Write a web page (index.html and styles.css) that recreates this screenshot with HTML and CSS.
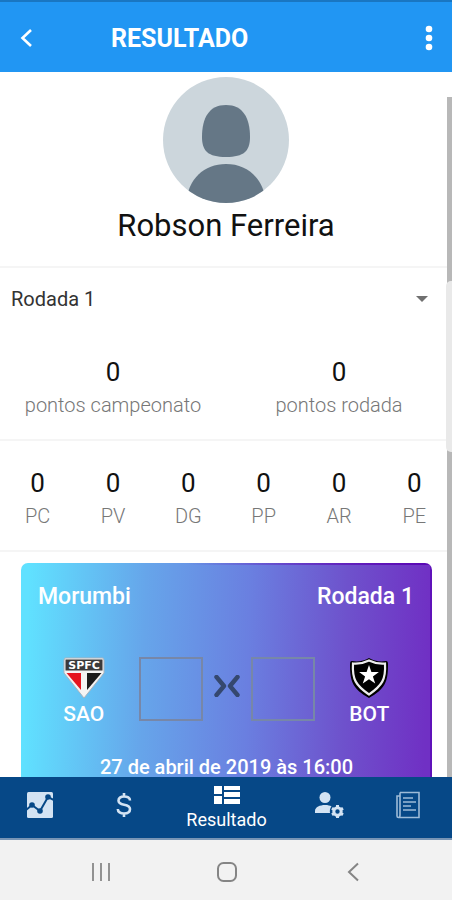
FILE: index.html
```html
<!DOCTYPE html>
<html lang="pt-BR">
<head>
<meta charset="utf-8">
<meta name="viewport" content="width=device-width, initial-scale=1">
<title>Resultado</title>
<link rel="stylesheet" href="styles.css">
</head>
<body>
<header class="topbar">
  <button class="icon-button" type="button" aria-label="Voltar">
    <svg width="14" height="20" viewBox="0 0 14 20"><path d="M13 2 4.500 10l8.500 8" fill="none" stroke="currentColor" stroke-width="2.6"/></svg>
  </button>
  <h1 class="topbar-title">RESULTADO</h1>
  <button class="icon-button icon-button-end" type="button" aria-label="Mais opções">
    <svg width="8" height="26" viewBox="0 0 8 26" fill="currentColor"><circle cx="4" cy="4" r="3.3"/><circle cx="4" cy="13" r="3.3"/><circle cx="4" cy="22" r="3.3"/></svg>
  </button>
</header>

<main class="content">
  <section class="profile">
    <svg class="avatar" viewBox="0 0 126 126" aria-hidden="true">
      <defs><clipPath id="avatar-circle"><circle cx="63" cy="63" r="63"/></clipPath></defs>
      <g clip-path="url(#avatar-circle)">
        <rect width="126" height="126" fill="#ccd6dc"/>
        <path d="M63 28c17 0 24 13 24 32 0 14-6 20-24 20s-24-6-24-20c0-19 7-32 24-32Z" fill="#657786"/>
        <path d="M23 126c2-24 18-39 40-39s38 15 40 39Z" fill="#657786"/>
      </g>
    </svg>
    <h2 class="profile-name">Robson Ferreira</h2>
  </section>

  <section class="summary">
    <label class="round-picker">
      <select class="round-select" aria-label="Rodada">
        <option>Rodada 1</option>
      </select>
      <svg class="round-caret" width="12" height="6" viewBox="0 0 12 6"><path d="M0 0h12L6 6Z" fill="#707070"/></svg>
    </label>
    <dl class="stats stats-points">
      <div class="stat"><dt>pontos campeonato</dt><dd>0</dd></div>
      <div class="stat"><dt>pontos rodada</dt><dd>0</dd></div>
    </dl>
  </section>

  <dl class="stats stats-detail">
    <div class="stat"><dt>PC</dt><dd>0</dd></div>
    <div class="stat"><dt>PV</dt><dd>0</dd></div>
    <div class="stat"><dt>DG</dt><dd>0</dd></div>
    <div class="stat"><dt>PP</dt><dd>0</dd></div>
    <div class="stat"><dt>AR</dt><dd>0</dd></div>
    <div class="stat"><dt>PE</dt><dd>0</dd></div>
  </dl>

  <article class="match">
    <div class="match-head"><span>Morumbi</span><span>Rodada 1</span></div>
    <div class="match-score">
      <div class="team">
        <svg width="42" height="42" viewBox="0 0 42 42" aria-hidden="true">
          <path d="M2 1h38l1 2v13L21 41 1 16V3Z" fill="#f4f4f4" stroke="#a9b3bd" stroke-width="1"/>
          <path d="M2.500 2.500h37v11h-37Z" fill="#3a3a3a"/>
          <path d="M3.500 16H18v17Z" fill="#e5151f"/>
          <path d="M38.500 16H24v17Z" fill="#1c1c1c"/>
          <text class="crest-text" x="21" y="12" text-anchor="middle">SPFC</text>
        </svg>
        <label for="score-home">SAO</label>
      </div>
      <input class="score" id="score-home" type="text" inputmode="numeric">
      <svg class="versus" width="26" height="22" viewBox="0 0 26 22" aria-hidden="true"><path d="M2.500 2 10 11 2.500 20M23.500 2 16 11l7.500 9" fill="none" stroke="#35486f" stroke-width="4.400" stroke-linecap="round" stroke-linejoin="round"/></svg>
      <input class="score" id="score-away" type="text" inputmode="numeric">
      <div class="team">
        <svg width="42" height="42" viewBox="0 0 42 42" aria-hidden="true">
          <path d="M21 1c5 3 11 4 17 3 2 0 2 2 2 4 0 17-3 24-19 33C5 32 2 25 2 8c0-2 0-4 2-4 6 1 12 0 17-3Z" fill="#000"/>
          <path d="M21 3.500c5 2.500 10 3.500 16 3 1 16-3 22-16 31C8 28.500 4 22.500 5 6.500c6 .5 11-.5 16-3Z" fill="#000" stroke="#eee" stroke-width="2.200"/>
          <path d="m21 8 2.400 7h7.500l-6 4.500 2.300 7.100-6.200-4.400-6.200 4.400 2.300-7.100-6-4.500h7.500Z" fill="#fff"/>
        </svg>
        <label for="score-away">BOT</label>
      </div>
    </div>
    <time class="match-date" datetime="2019-04-27T16:00">27 de abril de 2019 às 16:00</time>
  </article>
  <div class="scroll-track" aria-hidden="true"></div>
  <div class="edge-handle" aria-hidden="true"></div>
</main>

<nav class="tabbar">
  <a class="tab" href="#grafico" aria-label="Gráfico">
    <svg width="28" height="26" viewBox="0 0 28 26"><rect x="1" y="0" width="26" height="26" rx="1.500" fill="#d3e3f3"/><path d="M0 18 6 13l8 6 8-14 6 3" fill="none" stroke="#064887" stroke-width="2"/><g fill="#064887"><circle cx="6" cy="13" r="2.800"/><circle cx="14" cy="19" r="2.800"/><circle cx="22" cy="5" r="2.800"/></g></svg>
  </a>
  <a class="tab" href="#premios" aria-label="Prêmios">
    <svg width="16" height="24" viewBox="0 0 16 24" fill="none" stroke="#d3e3f3" stroke-width="2.600"><path d="M14 7.500C14 4.500 11.500 3.500 8 3.500S2.500 5 2.500 7.800C2.500 13.500 14 10 14 16c0 3-2.500 4.500-6 4.500s-6.200-1.500-6.200-4.500M8 0v4M8 20v4"/></svg>
  </a>
  <a class="tab tab-active" href="#resultado" aria-current="page">
    <svg width="28" height="20" viewBox="0 0 28 20" fill="#fff"><path d="M1 1h8v8H1ZM1 11h8v8H1ZM11 1h16v4H11ZM11 7h16v5H11ZM11 14h16v5H11Z"/></svg>
    <span>Resultado</span>
  </a>
  <a class="tab" href="#conta" aria-label="Conta">
    <svg width="30" height="26" viewBox="0 0 30 26" fill="#d3e3f3"><circle cx="11" cy="5.500" r="5.500"/><path d="M1 21v-2c0-4 5-6 10-6 3 0 5 .5 6.500 1.500-1.500 1.500-2 4-1.500 6.500Z"/><circle cx="23.500" cy="19.500" r="3.700" fill="none" stroke="#d3e3f3" stroke-width="3"/><path d="M23.500 13v3M23.500 23v3M18 16.200l2.500 1.500M26.500 21.300l2.500 1.500M18 22.800l2.500-1.500M26.500 17.700l2.500-1.500" stroke="#d3e3f3" stroke-width="3"/></svg>
  </a>
  <a class="tab" href="#regras" aria-label="Regras">
    <svg width="24" height="28" viewBox="0 0 24 28" fill="none" stroke="#9dbbd8" stroke-width="1.600"><path d="M4 1.500h19v25H2.500C1.500 26.500 1 26 1 25V5h3M4 1.500V24c0 1.500-.5 2.500-1.500 2.500"/><path d="M7 7h10M7 11h13M7 15h8M7 19h13"/></svg>
  </a>
</nav>

<div class="system-nav">
  <button class="system-button" type="button" aria-label="Recentes"><svg width="20" height="20" viewBox="0 0 20 20" fill="none" stroke="#929292" stroke-width="2"><path d="M2 1v18M10 1v18M18 1v18"/></svg></button>
  <button class="system-button" type="button" aria-label="Início"><svg width="22" height="22" viewBox="0 0 22 22" fill="none" stroke="#858585" stroke-width="2"><rect x="2" y="2" width="18" height="18" rx="5.500"/></svg></button>
  <button class="system-button" type="button" aria-label="Voltar"><svg width="12" height="20" viewBox="0 0 12 20" fill="none" stroke="#858585" stroke-width="2"><path d="m11 1.500-9 8.500 9 8.500"/></svg></button>
</div>
</body>
</html>
```
FILE: styles.css
```css
* {
  box-sizing: border-box;
}

body {
  display: flex;
  flex-direction: column;
  height: 100vh;
  margin: 0;
  background: #fff;
  color: #111;
  font-family: Roboto, "Liberation Sans", sans-serif;
}

h1, h2, dl, dd {
  margin: 0;
}

button {
  border: 0;
  background: none;
  padding: 0;
}

svg {
  display: block;
  flex: none;
}

.topbar {
  display: flex;
  align-items: center;
  flex: none;
  height: 72px;
  padding: 2px 19px 0 18px;
  border-top: 2px solid #1976c2;
  background: #2196f3;
  color: #fff;
}

.icon-button {
  display: flex;
  width: 93px;
  color: #fff;
}

.icon-button-end {
  justify-content: flex-end;
  width: auto;
  margin-left: auto;
}

.topbar-title {
  padding-top: 2px;
  font-size: 25px;
  line-height: 32px;
  font-weight: 700;
}

.content {
  position: relative;
  flex: 1;
  min-height: 0;
  overflow: hidden;
}

.profile {
  display: flex;
  flex-direction: column;
  align-items: center;
  padding: 5px 0 18px;
  border-bottom: 2px solid #f5f5f5;
}

.avatar {
  width: 126px;
  height: 126px;
}

.profile-name {
  font-size: 31px;
  line-height: 45px;
  font-weight: 400;
}

.summary {
  border-bottom: 2px solid #f5f5f5;
}

.round-picker {
  display: flex;
  align-items: center;
  height: 62px;
  padding: 0 24px 0 11px;
}

.round-select {
  flex: 1;
  appearance: none;
  padding: 0;
  border: 0;
  background: none;
  color: #333;
  font: 400 20px/28px Roboto, "Liberation Sans", sans-serif;
}

.stats {
  display: grid;
}

.stats-points {
  grid-template-columns: repeat(2, 1fr);
  padding: 25px 0 18px;
}

.stats-detail {
  grid-template-columns: repeat(6, 1fr);
  padding: 25px 0 18px;
  border-bottom: 2px solid #f5f5f5;
}

.stat {
  display: flex;
  flex-direction: column-reverse;
  align-items: center;
}

.stat dt {
  color: #777;
  font-size: 20px;
  line-height: 32px;
  font-weight: 300;
}

.stat dd {
  font-size: 26px;
  line-height: 34px;
  font-weight: 400;
}

.match {
  margin: 11px 20px 0 21px;
  padding-bottom: 20px;
  border-radius: 7px;
  background:
    linear-gradient(90deg, transparent 40%, #5a08b4) top / 100% 2px no-repeat,
    linear-gradient(#5f12ba, #5f12ba) right / 2px 100% no-repeat,
    linear-gradient(92deg, #60e1ff 2%, #66a5ea 30%, #6a7fe0 55%, #6e52cc 78%, #7030c4 98%);
  color: #fff;
  font-weight: 500;
}

.match-head {
  display: flex;
  justify-content: space-between;
  padding: 18px 18px 0 17px;
  font-size: 23px;
  line-height: 32px;
}

.match-score {
  display: grid;
  grid-template-columns: 1fr 64px 48px 64px 1fr;
  align-items: start;
  padding: 44px 8px 0;
}

.team {
  display: flex;
  flex-direction: column;
  align-items: center;
  font-size: 21px;
  line-height: 30px;
}

.crest-text {
  fill: #fff;
  font: 700 11px "DejaVu Sans", sans-serif;
}

.score {
  width: 64px;
  height: 64px;
  padding: 0;
  border: 2px solid #7787a8;
  background: none;
  color: #fff;
  font: 500 24px/32px Roboto, "Liberation Sans", sans-serif;
  text-align: center;
}

.versus {
  justify-self: center;
  margin-top: 18px;
}

.match-date {
  display: block;
  padding-top: 24px;
  font-size: 20px;
  line-height: 28px;
  text-align: center;
}

.scroll-track {
  position: absolute;
  top: 25px;
  right: 0;
  bottom: 0;
  width: 5px;
  background: #b8b8b8;
}

.edge-handle {
  position: absolute;
  top: 209px;
  right: 0;
  width: 6px;
  height: 171px;
  border-radius: 5px 0 0 5px;
  background: #e9e9e9;
}

.tabbar {
  display: grid;
  grid-template-columns: 80fr 88fr 117fr 88fr 69fr;
  flex: none;
  height: 63px;
  padding-right: 10px;
  border-bottom: 2px solid #7895b5;
  background: #064887;
}

.tab {
  display: flex;
  flex-direction: column;
  align-items: center;
  justify-content: center;
  padding-bottom: 5px;
  color: #fff;
  font-size: 18px;
  line-height: 26px;
  text-decoration: none;
}

.tab-active {
  gap: 2px;
  padding: 2px 0 0;
}

.system-nav {
  display: grid;
  grid-template-columns: repeat(3, 126px);
  justify-content: center;
  flex: none;
  height: 60px;
  padding-left: 2px;
  background: #f2f2f2;
}

.system-button {
  display: flex;
  align-items: center;
  justify-content: center;
  padding-top: 4px;
}
```
